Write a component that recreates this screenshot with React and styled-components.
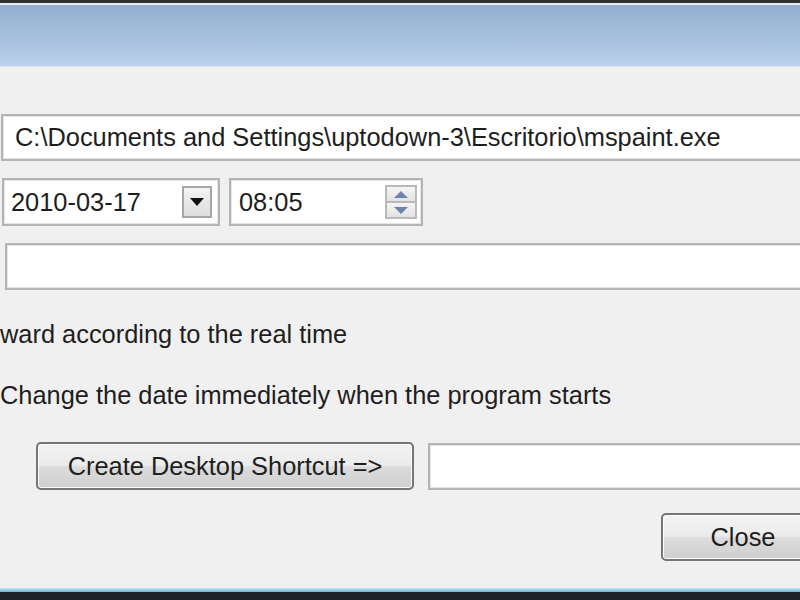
import React from "react";
import styled, { createGlobalStyle } from "styled-components";

const GlobalStyle = createGlobalStyle`
  html, body {
    margin: 0;
    padding: 0;
    background: #f0f0f0;
    overflow: hidden;
  }
`;

function App() {
  return (
    <Window>
      <GlobalStyle />
      <TopEdge />
      <TitleBar />
      <Body>
        <PathField>C:\Documents and Settings\uptodown-3\Escritorio\mspaint.exe</PathField>
        <DateRow>
          <DateBox>
            <span>2010-03-17</span>
            <DropButton>
              <svg width="14" height="8" viewBox="0 0 14 8">
                <path d="M0 0 H14 L7 8 Z" fill="#111" />
              </svg>
            </DropButton>
          </DateBox>
          <TimeBox>
            <span>08:05</span>
            <Spinner>
              <SpinHalf>
                <svg width="14" height="7" viewBox="0 0 14 7">
                  <path d="M0 7 L7 0 L14 7 Z" fill="#6f82ad" />
                </svg>
              </SpinHalf>
              <SpinHalf>
                <svg width="14" height="7" viewBox="0 0 14 7">
                  <path d="M0 0 H14 L7 7 Z" fill="#6f82ad" />
                </svg>
              </SpinHalf>
            </Spinner>
          </TimeBox>
        </DateRow>
        <EmptyField />
        <Label top={30}>ward according to the real time</Label>
        <Label top={33}>Change the date immediately when the program starts</Label>
        <ShortcutRow>
          <Button width={378}>Create Desktop Shortcut =&gt;</Button>
          <ShortcutField />
        </ShortcutRow>
        <CloseRow>
          <Button width={164}>Close</Button>
        </CloseRow>
      </Body>
      <BottomEdge />
    </Window>
  );
}

export default App;

const Window = styled.div`
  width: 800px;
  height: 600px;
  display: flex;
  flex-direction: column;
  overflow: hidden;
  background: #f0f0f0;
  font-family: Tahoma, "Liberation Sans", Arial, sans-serif;
  font-size: 25.4px;
  color: #1e1e1e;
`;

const TopEdge = styled.div`
  height: 3px;
  background: #2f3133;
  border-bottom: 2px solid #e6ecf3;
`;

const TitleBar = styled.div`
  height: 61px;
  background: linear-gradient(#93aecf, #a9c2df 60%, #b9d1ea);
  border-bottom: 1px solid #dbe6f1;
`;

const Body = styled.div`
  flex: 1;
  display: flex;
  flex-direction: column;
  padding-top: 47px;
`;

const Field = styled.div`
  box-sizing: border-box;
  height: 47px;
  background: #fff;
  border: 2px solid #b4b4b4;
  box-shadow: inset 0 0 0 1px #e4e4e4;
  display: flex;
  align-items: center;
`;

const PathField = styled(Field)`
  margin-left: 1px;
  margin-right: -30px;
  padding-left: 12px;
  white-space: nowrap;
`;

const DateRow = styled.div`
  display: flex;
  gap: 9px;
  margin-top: 17px;
  margin-left: 2px;
`;

const DateBox = styled(Field)`
  width: 218px;
  height: 48px;
  padding: 0 6px 0 7px;
  justify-content: space-between;
`;

const TimeBox = styled(Field)`
  width: 194px;
  height: 48px;
  padding: 0 4px 0 8px;
  justify-content: space-between;
`;

const DropButton = styled.div`
  box-sizing: border-box;
  width: 30px;
  height: 32px;
  border: 2px solid #a6a6a6;
  background: linear-gradient(#f4f4f4, #dcdcdc);
  display: flex;
  align-items: center;
  justify-content: center;
`;

const Spinner = styled.div`
  box-sizing: border-box;
  width: 32px;
  height: 34px;
  display: flex;
  flex-direction: column;
`;

const SpinHalf = styled.div`
  flex: 1;
  box-sizing: border-box;
  border: 2px solid #b9b9b9;
  background: linear-gradient(#f6f6f6, #e2e2e2);
  display: flex;
  align-items: center;
  justify-content: center;
  & + & {
    border-top: none;
  }
`;

const EmptyField = styled(Field)`
  margin-top: 17px;
  margin-left: 5px;
  margin-right: -30px;
`;

const Label = styled.div`
  margin-top: ${(p) => p.top}px;
  height: 28px;
  line-height: 28px;
  white-space: nowrap;
`;

const ShortcutRow = styled.div`
  display: flex;
  align-items: center;
  gap: 14px;
  margin-top: 33px;
  margin-left: 36px;
`;

const Button = styled.div`
  box-sizing: border-box;
  flex: none;
  width: ${(p) => p.width}px;
  height: 48px;
  border: 2px solid #767676;
  border-radius: 5px;
  box-shadow: inset 0 0 0 1px #fbfbfb;
  background: linear-gradient(#f3f3f3 0%, #ebebeb 48%, #dcdcdc 52%, #cfcfcf 100%);
  display: flex;
  align-items: center;
  justify-content: center;
  white-space: nowrap;
`;

const ShortcutField = styled(Field)`
  flex: 1;
  margin-right: -30px;
`;

const CloseRow = styled.div`
  display: flex;
  margin-top: 23px;
  margin-left: 661px;
`;

const BottomEdge = styled.div`
  height: 4px;
  background: linear-gradient(#bfe4f3, #6fb6d6);
  border-bottom: 8px solid #1d2428;
`;
